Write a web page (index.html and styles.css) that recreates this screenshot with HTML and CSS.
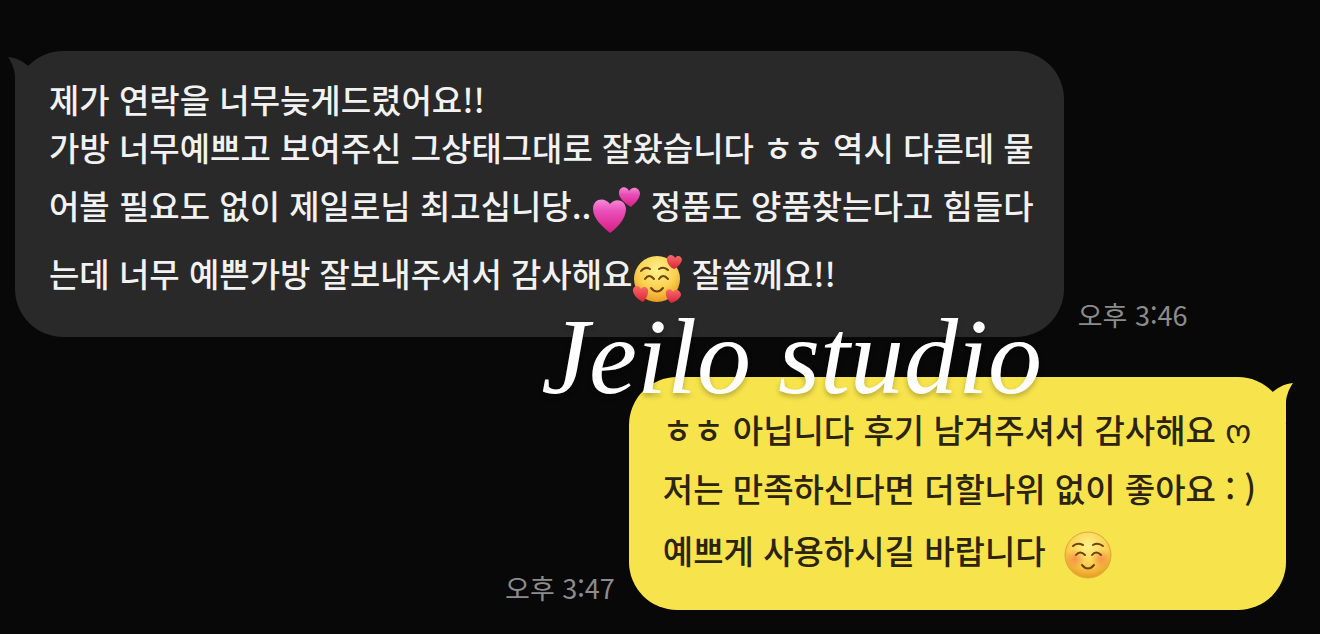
FILE: index.html
```html
<!DOCTYPE html>
<html lang="ko">
<head>
    <meta charset="UTF-8">
    <meta name="viewport" content="width=device-width, initial-scale=1.0">
    <title>Jeilo studio</title>
    <link rel="stylesheet" href="styles.css">
</head>
<body>
    <main class="chat">
        <article class="message received">
            <div class="bubble">
                <svg class="tail" viewBox="0 0 28 40" aria-hidden="true">
                    <path d="M0 0C9 1 17 5 22 11L28 20V40H7V20C7 13 4 6 0 0Z"/>
                </svg>
                <p class="line">제가 연락을 너무늦게드렸어요!!</p>
                <p class="line">가방 너무예쁘고 보여주신 그상태그대로 잘왔습니다 ㅎㅎ 역시 다른데 물</p>
                <p class="line tall">어볼 필요도 없이 제일로님 최고십니당..<svg class="emoji" viewBox="0 0 50 50" role="img" aria-label="두 하트">
                        <defs>
                            <linearGradient id="pink" x1="0" y1="0" x2="0" y2="1">
                                <stop offset="0" stop-color="#f78ad6"/>
                                <stop offset=".35" stop-color="#e94fb9"/>
                                <stop offset="1" stop-color="#d91d83"/>
                            </linearGradient>
                        </defs>
                        <path fill="url(#pink)" d="M19 48C13 43 2 34 2 24C2 13 14 12 19 19C24 12 35 15 35 24C35 34 25 44 19 48Z"/>
                        <path fill="url(#pink)" d="M40 22C35 19 27 13 28 7C29 1 36 1 38 6C42 0 49 3 49 9C48 15 43 19 40 22Z"/>
                    </svg> 정품도 양품찾는다고 힘들다</p>
                <p class="line tall">는데 너무 예쁜가방 잘보내주셔서 감사해요<svg class="emoji" viewBox="0 0 50 50" role="img" aria-label="하트와 함께 웃는 얼굴">
                        <defs>
                            <radialGradient id="face" cx=".5" cy=".3" r=".7">
                                <stop offset="0" stop-color="#fff28a"/>
                                <stop offset=".6" stop-color="#fbd04f"/>
                                <stop offset="1" stop-color="#e99b24"/>
                            </radialGradient>
                            <linearGradient id="red" x1="0" y1="0" x2="0" y2="1">
                                <stop offset="0" stop-color="#f96b67"/>
                                <stop offset="1" stop-color="#d9243c"/>
                            </linearGradient>
                        </defs>
                        <circle cx="25" cy="26" r="23" fill="url(#face)"/>
                        <path class="feature" d="M9 18Q13 13 18 16M27 16Q32 13 36 17M13 26Q17 20 22 26M27 26Q31 20 36 26M19 35Q25 42 31 35"/>
                        <path fill="url(#red)" d="M11 49C6 47 0 41 1 36C3 31 8 33 9 36C12 32 17 35 16 39C16 43 13 47 11 49Z"/>
                        <path fill="url(#red)" d="M42 16C37 14 34 8 35 5C37 0 42 2 43 5C46 1 50 4 50 7C49 11 45 15 42 16Z"/>
                        <path fill="url(#red)" d="M39 50C36 47 33 43 34 39C35 35 40 36 41 39C44 35 49 38 49 42C48 46 43 49 39 50Z"/>
                    </svg> 잘쓸께요!!</p>
            </div>
            <time class="time" datetime="15:46">오후 3:46</time>
        </article>

        <article class="message sent">
            <time class="time" datetime="15:47">오후 3:47</time>
            <div class="bubble">
                <svg class="tail" viewBox="0 0 28 40" aria-hidden="true">
                    <path d="M28 0C19 1 11 5 6 11L0 20V40H21V20C21 13 24 6 28 0Z"/>
                </svg>
                <p class="line">ㅎㅎ 아닙니다 후기 남겨주셔서 감사해요 <span class="glyph">ო</span></p>
                <p class="line">저는 만족하신다면 더할나위 없이 좋아요 : )</p>
                <p class="line tall">예쁘게 사용하시길 바랍니다 <svg class="emoji smile" viewBox="0 0 50 50" role="img" aria-label="웃는 얼굴">
                        <defs>
                            <radialGradient id="blush">
                                <stop offset="0" stop-color="#f57845" stop-opacity=".7"/>
                                <stop offset="1" stop-color="#f57845" stop-opacity="0"/>
                            </radialGradient>
                        </defs>
                        <circle cx="25" cy="25" r="23" fill="url(#face)" stroke="#dfa53a" stroke-width="1"/>
                        <circle cx="12" cy="29" r="10" fill="url(#blush)"/>
                        <circle cx="38" cy="29" r="10" fill="url(#blush)"/>
                        <path class="feature" d="M10 16Q14 12 20 15M30 15Q35 12 40 16M13 25Q17 20 22 25M29 25Q33 20 38 25M19 35Q25 42 31 35"/>
                    </svg></p>
            </div>
        </article>

        <p class="watermark">Jeilo studio</p>
    </main>
</body>
</html>
```

FILE: styles.css
```css
* {
    box-sizing: border-box;
}

body {
    margin: 0;
    background-color: #080808;
    color: #f2f2f2;
    font-family: 'Noto Sans CJK KR', sans-serif;
    font-size: 33px;
    font-weight: 500;
}

p {
    margin: 0;
}

.chat {
    position: relative;
    display: flex;
    flex-direction: column;
    gap: 40px;
    padding: 51px 34px 24px 15px;
}

.message {
    display: flex;
    align-items: flex-end;
    gap: 14px;
}

.sent {
    justify-content: flex-end;
}

.bubble {
    position: relative;
    padding: 24px 30px 30px 34px;
    border-radius: 48px;
    background-color: #292929;
}

.sent .bubble {
    padding: 24px 30px 26px 34px;
    background-color: #f7e34b;
    color: #2b2410;
}

.line {
    line-height: 48px;
    white-space: nowrap;
}

.line.tall {
    line-height: 68px;
}

.sent .line {
    line-height: 56px;
}

.sent .line.tall {
    line-height: 68px;
}

/* little ear in the top corner of a bubble */
.tail {
    position: absolute;
    top: 2px;
    left: -7px;
    width: 28px;
    height: 48px;
    fill: #292929;
}

.sent .tail {
    left: auto;
    right: -7px;
    fill: #f7e34b;
}

.emoji {
    width: 50px;
    height: 50px;
    vertical-align: middle;
}

.smile {
    margin-left: 8px;
}

.feature {
    fill: none;
    stroke: #70420f;
    stroke-width: 2;
    stroke-linecap: round;
}

.glyph {
    font-family: 'DejaVu Sans', sans-serif;
}

.time {
    color: #8c8c8c;
    font-size: 27px;
    font-weight: 400;
    line-height: 44px;
    white-space: nowrap;
}

.watermark {
    position: absolute;
    top: 297px;
    left: 41%;
    color: #fff;
    font-family: 'Liberation Serif', serif;
    font-size: 108px;
    font-weight: 400;
    font-style: italic;
    line-height: 120px;
    text-shadow: 0 3px 5px rgba(0, 0, 0, 0.25);
    white-space: nowrap;
}
```
